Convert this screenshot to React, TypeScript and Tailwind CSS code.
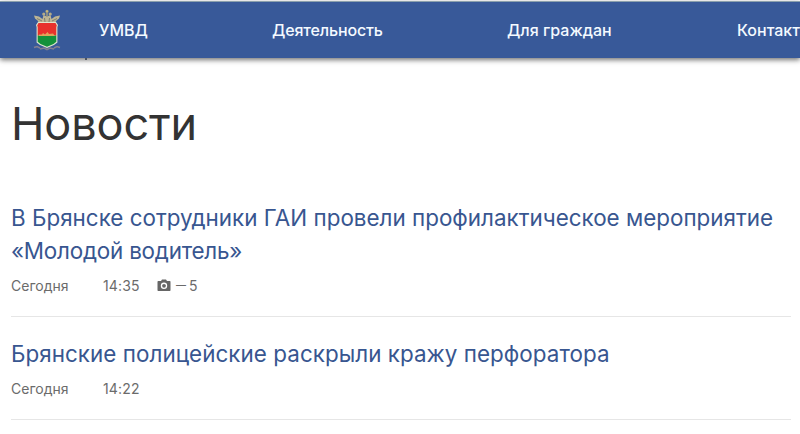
import React from "react";

type NewsItem = {
  title: { text: string; className: string }[];
  date: string;
  time: string;
  photos?: number;
};

const news: NewsItem[] = [
  {
    title: [
      { text: "В Брянске сотрудники ГАИ провели профилактическое мероприятие", className: "tracking-[0.01px]" },
      { text: "«Молодой водитель»", className: "tracking-[-0.21px]" },
    ],
    date: "Сегодня",
    time: "14:35",
    photos: 5,
  },
  {
    title: [{ text: "Брянские полицейские раскрыли кражу перфоратора", className: "tracking-[0.05px]" }],
    date: "Сегодня",
    time: "14:22",
  },
];

const Emblem: React.FC = () => (
  <svg width="28" height="42" viewBox="0 0 28 42" className="block shrink-0">
    {/* eagle wings, heads and crown */}
    <path
      d="M1 6.5 L6 7.5 L9.5 10 L10.5 6 L14 7.5 L17.5 6 L18.5 10 L22 7.5 L27 6.5 L26 9.5 L23.5 11.5 L22 14 L6 14 L4.5 11.5 L2 9.5 Z"
      fill="#bdb594"
    />
    <path d="M4 9.5 L9 12 M24 9.5 L19 12 M11.5 9 L12 13 M16.5 9 L16 13" stroke="#6f7169" strokeWidth="0.8" />
    <path d="M12.7 3.6 L12.5 1.8 L14 .8 L15.5 1.8 L15.3 3.6 Z" fill="#c9b878" />
    <circle cx="10.8" cy="5" r="1.6" fill="#b5ac88" />
    <circle cx="17.2" cy="5" r="1.6" fill="#b5ac88" />
    <path d="M14 3 V8" stroke="#a9a27c" strokeWidth="1.4" />
    {/* ribbon under the shield */}
    <path
      d="M1 38.5 L4 37.5 L7 39 M21 39 L24 37.5 L27 38.5 M7 40 L11 39 L14 40.5 L17 39 L21 40"
      fill="none"
      stroke="#858090"
      strokeWidth="1.6"
    />
    {/* shield */}
    <path d="M5 13 H23 L25 16 L24.4 18 V33.5 L21 36 L14 39 L7 36 L3.6 33.5 V18 L3 16 Z" fill="#dfe6cd" />
    <path d="M5.5 14 H22.5 L23.8 16.5 L23.3 18 V26.5 H4.7 V18 L4.2 16.5 Z" fill="#e8312c" />
    <path d="M4.7 26.5 H23.3 V32.8 L20.5 35 L14 37.8 L7.5 35 L4.7 32.8 Z" fill="#14913a" />
    <path d="M6 27 V25.5 H9 L10 24 L12 25.5 L14.5 23 L16 25 L20 24.5 L22 27 Z" fill="#e0a35a" />
  </svg>
);

const CameraIcon: React.FC = () => (
  <svg width="14" height="13" viewBox="0 0 14 13" className="block">
    <path
      fillRule="evenodd"
      d="M4 2 L5 .5 H9 L10 2 H12.8 Q13.5 2 13.5 2.8 V11.2 Q13.5 12 12.8 12 H1.2 Q.5 12 .5 11.2 V2.8 Q.5 2 1.2 2 Z M7 3.6 A3.2 3.2 0 1 0 7 10 A3.2 3.2 0 1 0 7 3.6 Z"
      fill="#666666"
    />
    <circle cx="7" cy="6.8" r="1.9" fill="#666666" />
  </svg>
);

const App: React.FC = () => {
  return (
    <div className="h-[434px] w-full overflow-hidden bg-white pt-px font-['Inter','Liberation_Sans',sans-serif]">
      <header className="relative flex h-[57px] items-center border-t border-[#8ba0ad] bg-[#385999] pl-[33px] text-base font-medium text-[#f4faff] shadow-[0_2px_5px_rgba(0,0,0,0.55)]">
        <Emblem />
        <nav className="flex whitespace-nowrap">
          <a className="ml-[38px] w-[173px]">УМВД</a>
          <a className="w-[235px] tracking-[-0.15px]">Деятельность</a>
          <a className="w-[230px]">Для граждан</a>
          <a>Контакты</a>
        </nav>
        {/* descender of the line scrolled under the header */}
        <span className="absolute top-[56px] left-[85px] h-[2px] w-[2px] bg-[#4d5560]" />
      </header>

      <main className="pr-[9px] pl-[11px]">
        <h1 className="mt-[38px] text-[45px] leading-[56px] tracking-[-0.1px] text-[#333333]">Новости</h1>

        <div className="mt-[49px]">
          {news.map((item) => (
            <article key={item.time} className="mb-[20px] border-b border-[#e6e6e6] pb-[20px]">
              <h2 className="text-[22.4px] leading-[33px] text-[#385690]">
                {item.title.map((line) => (
                  <span key={line.text} className={`block whitespace-nowrap ${line.className}`}>
                    {line.text}
                  </span>
                ))}
              </h2>
              <div className="mt-[7px] flex h-[22px] items-center text-[14px] text-[#6b6b6b]">
                <span className="w-[92px]">{item.date}</span>
                <span className="w-[54px] tracking-[0.15px]">{item.time}</span>
                {item.photos && (
                  <span className="flex items-center gap-[5px]">
                    <CameraIcon />
                    <span className="flex items-center gap-[3px]">
                      <span className="pt-px text-[10px] font-semibold">—</span>
                      <span>{item.photos}</span>
                    </span>
                  </span>
                )}
              </div>
            </article>
          ))}
        </div>
      </main>
    </div>
  );
};

export default App;
